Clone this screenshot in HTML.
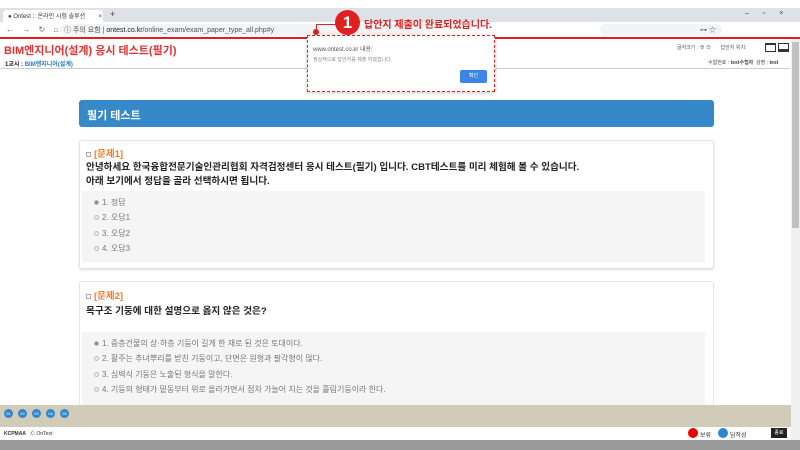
<!DOCTYPE html>
<html><head><meta charset="utf-8"><style>
*{margin:0;padding:0;box-sizing:border-box}
body{width:800px;height:450px;overflow:hidden;position:relative;background:#fff;font-family:"Liberation Sans","Noto Sans CJK KR",sans-serif;color:#222}
.a{position:absolute}
.opt{position:absolute;left:94px;font-size:8px;color:#777}
.opt i{display:inline-block;width:5px;height:5px;border-radius:50%;border:1px solid #bbb;background:#eee;margin-right:3px;vertical-align:0}
</style></head><body>
<div class="a" style="left:0;top:8px;width:800px;height:14px;background:#dee1e6"></div>
<div class="a" style="left:3px;top:10px;width:100px;height:12px;background:#fff;border-radius:4px 4px 0 0"></div>
<div class="a" style="left:8px;top:11px;font-size:6px;color:#333">● Ontest :: 온라인 시험 솔루션 &nbsp;&nbsp;&nbsp;&nbsp;&nbsp;&nbsp;&nbsp;×</div>
<div class="a" style="left:110px;top:9px;font-size:9px;color:#444">+</div>
<div class="a" style="left:745px;top:10px;font-size:7px;color:#444;word-spacing:12px">– ▫ ×</div>
<div class="a" style="left:0;top:22px;width:800px;height:15px;background:#fff"></div>
<div class="a" style="left:6px;top:25px;font-size:8px;color:#666;word-spacing:6px">← → ↻ ⌂</div>
<div class="a" style="left:60px;top:24px;width:365px;height:11px;background:#f1f3f4;border-radius:6px"></div>
<div class="a" style="left:400px;top:24px;width:22px;height:11px;background:#f1f3f4"></div>
<div class="a" style="left:600px;top:24px;width:122px;height:11px;background:#f1f3f4;border-radius:6px"></div>
<div class="a" style="left:64px;top:25px;font-size:7px;color:#555">ⓘ 주의 요함 | <b style="font-weight:normal;color:#222">ontest.co.kr</b>/online_exam/exam_paper_type_all.php#y</div>
<div class="a" style="left:700px;top:25px;font-size:7px;color:#555">⊶ ☆</div>
<div class="a" style="left:0;top:37px;width:800px;height:2px;background:#e02020"></div>
<div class="a" style="left:4px;top:42px;font-size:11px;font-weight:bold;color:#e53030">BIM엔지니어(설계) 응시 테스트(필기)</div>
<div class="a" style="left:5px;top:59px;font-size:6px;font-weight:bold;color:#222">1교시 : <span style="color:#2a7ac0">BIM엔지니어(설계)</span></div>
<div class="a" style="left:0;top:68px;width:790px;height:1px;background:#ccc"></div>
<div class="a" style="left:677px;top:44px;font-size:5px;color:#555">글자크기 : ⊕ ⊖ &nbsp;&nbsp;&nbsp;&nbsp;&nbsp; 답안지 위치:</div>
<div class="a" style="left:765px;top:43px;width:11px;height:9px;border:1px solid #333;border-top-width:2px"></div>
<div class="a" style="left:778px;top:43px;width:11px;height:9px;border:1px solid #333;border-bottom-width:3px"></div>
<div class="a" style="left:708px;top:59px;font-size:5px;color:#444">수험번호 : <b>test수험자</b> &nbsp;성명 : <b>test</b></div>
<div class="a" style="left:791px;top:39px;width:9px;height:401px;background:#f0f0f0"></div>
<div class="a" style="left:792px;top:42px;width:7px;height:186px;background:#c1c1c1"></div>
<div class="a" style="left:79px;top:100px;width:635px;height:27px;background:#3689c8;border-radius:3px"></div>
<div class="a" style="left:87px;top:107px;font-size:11px;font-weight:bold;color:#fff">필기 테스트</div>
<div class="a" style="left:79px;top:140px;width:635px;height:129px;border:1px solid #e4e4e4;border-radius:3px;box-shadow:0 1px 2px #ddd"></div>
<div class="a" style="left:86px;top:146px;font-size:9.5px;font-weight:bold;color:#f07a2a"><span style="display:inline-block;width:5px;height:5px;border:1px solid #aaa;margin-right:3px"></span>[문제1]</div>
<div class="a" style="left:86px;top:161px;font-size:9.6px;font-weight:bold;line-height:14px;color:#222">안녕하세요 한국융합전문기술인관리협회 자격검정센터 응시 테스트(필기) 입니다. CBT테스트를 미리 체험해 볼 수 있습니다.<br>아래 보기에서 정답을 골라 선택하시면 됩니다.</div>
<div class="a" style="left:82px;top:191px;width:623px;height:71px;background:#f5f5f5"></div>
<div class="opt" style="top:197px"><i style="background:#888"></i>1. 정답</div>
<div class="opt" style="top:212px"><i></i>2. 오답1</div>
<div class="opt" style="top:228px"><i></i>3. 오답2</div>
<div class="opt" style="top:243px"><i></i>4. 오답3</div>
<div class="a" style="left:79px;top:281px;width:635px;height:130px;border:1px solid #e4e4e4;border-radius:3px"></div>
<div class="a" style="left:86px;top:288px;font-size:9.5px;font-weight:bold;color:#f07a2a"><span style="display:inline-block;width:5px;height:5px;border:1px solid #aaa;margin-right:3px"></span>[문제2]</div>
<div class="a" style="left:86px;top:303px;font-size:9.6px;font-weight:bold;color:#222">목구조 기둥에 대한 설명으로 옳지 않은 것은?</div>
<div class="a" style="left:82px;top:332px;width:623px;height:75px;background:#f5f5f5"></div>
<div class="opt" style="top:338px"><i style="background:#888"></i>1. 중층건물의 상·하층 기둥이 길게 한 재로 된 것은 토대이다.</div>
<div class="opt" style="top:353px"><i></i>2. 활주는 추녀뿌리를 받친 기둥이고, 단면은 원형과 팔각형이 많다.</div>
<div class="opt" style="top:369px"><i></i>3. 심벽식 기둥은 노출된 형식을 말한다.</div>
<div class="opt" style="top:384px"><i></i>4. 기둥의 형태가 밑동부터 위로 올라가면서 점차 가늘어 지는 것을 흘림기둥이라 한다.</div>
<div class="a" style="left:0;top:405px;width:791px;height:22px;background:#d1ccb9"></div>
<div class="a" style="left:4px;top:409px;display:flex;gap:5px">
<span style="width:9px;height:9px;border-radius:50%;background:#2f86d0;font-size:4px;color:#fff;text-align:center;line-height:9px">01</span><span style="width:9px;height:9px;border-radius:50%;background:#2f86d0;font-size:4px;color:#fff;text-align:center;line-height:9px">02</span><span style="width:9px;height:9px;border-radius:50%;background:#2f86d0;font-size:4px;color:#fff;text-align:center;line-height:9px">03</span><span style="width:9px;height:9px;border-radius:50%;background:#2f86d0;font-size:4px;color:#fff;text-align:center;line-height:9px">04</span><span style="width:9px;height:9px;border-radius:50%;background:#2f86d0;font-size:4px;color:#fff;text-align:center;line-height:9px">05</span></div>
<div class="a" style="left:0;top:427px;width:791px;height:13px;background:#fff"></div>
<div class="a" style="left:4px;top:430px;font-size:5px;color:#333"><b>KCPMAA</b> &nbsp;&nbsp;Ⓒ OnTest</div>
<div class="a" style="left:688px;top:428px;width:10px;height:10px;border-radius:50%;background:#e00"></div>
<div class="a" style="left:700px;top:430px;font-size:6px;color:#333">보류</div>
<div class="a" style="left:718px;top:428px;width:10px;height:10px;border-radius:50%;background:#2f86d0"></div>
<div class="a" style="left:730px;top:430px;font-size:6px;color:#333">답작성</div>
<div class="a" style="left:771px;top:428px;width:16px;height:10px;background:#222;color:#fff;font-size:5px;text-align:center;line-height:10px">종료</div>
<div class="a" style="left:0;top:440px;width:800px;height:10px;background:#9a9a9a"></div>
<div class="a" style="left:307px;top:35px;width:188px;height:57px;background:#fff;border:1.5px dashed #e02020;box-shadow:0 1px 4px rgba(0,0,0,.2)"></div>
<div class="a" style="left:313px;top:44px;font-size:6px;color:#555">www.ontest.co.kr 내용:</div>
<div class="a" style="left:313px;top:56px;font-size:5px;color:#888">정상적으로 답안지를 제출 하였습니다.</div>
<div class="a" style="left:460px;top:70px;width:27px;height:13px;background:#3b86e6;border-radius:2px;color:#fff;font-size:5px;text-align:center;line-height:13px">확인</div>
<div class="a" style="left:316px;top:24px;width:22px;height:7px;border-left:1.5px solid #e02020;border-top:1.5px solid #e02020"></div>
<div class="a" style="left:313px;top:29px;width:6px;height:6px;border-radius:50%;background:#e02020"></div>
<div class="a" style="left:335px;top:10px;width:25px;height:25px;border-radius:50%;background:#e02020;color:#fff;font-size:17px;font-weight:bold;text-align:center;line-height:25px">1</div>
<div class="a" style="left:364px;top:16px;font-size:10px;font-weight:bold;color:#e02020">답안지 제출이 완료되었습니다.</div>
</body></html>
